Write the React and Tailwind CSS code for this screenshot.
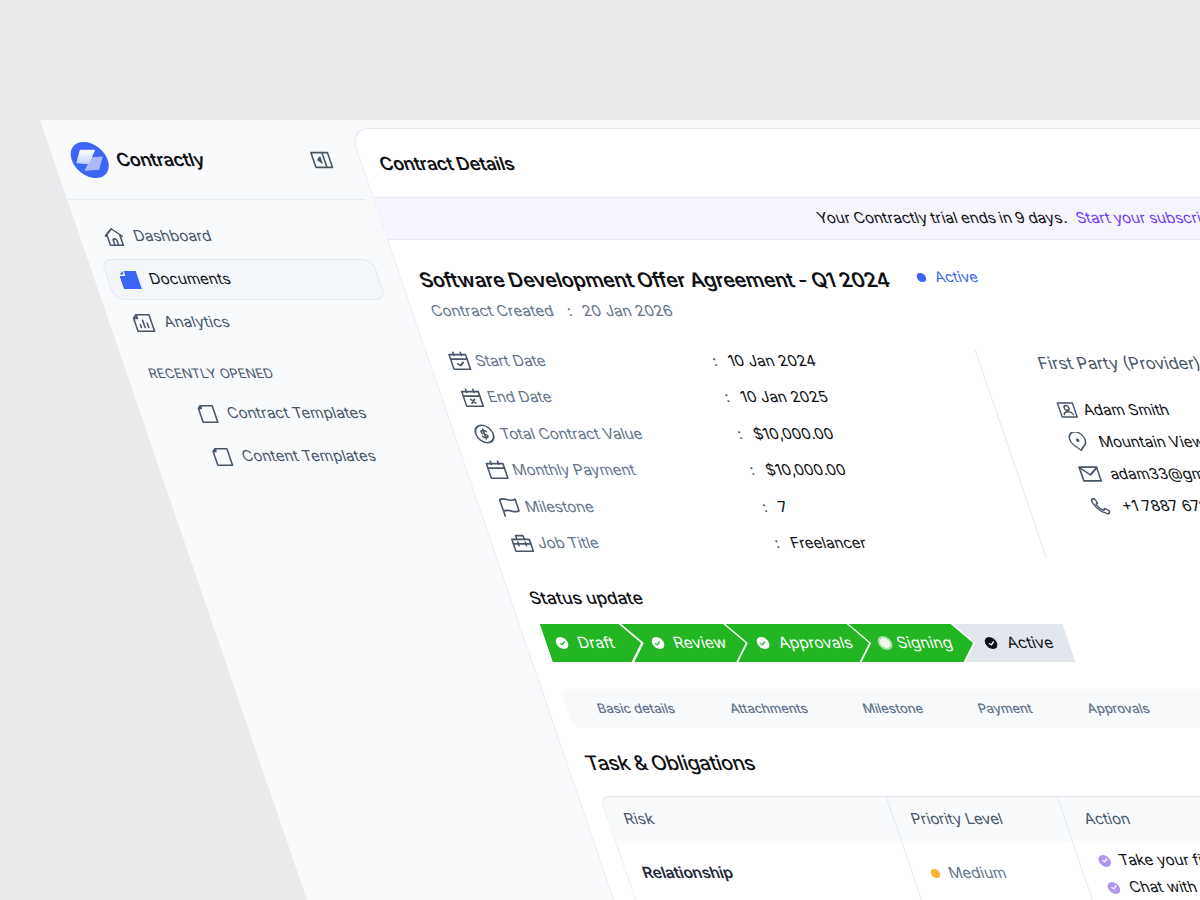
import React from "react";
import { Check } from "lucide-react";

const S = ({ children, size = 20, vb = 24, sw = 1.8, className = "" }) => (
  <svg width={size} height={size} viewBox={`0 0 ${vb} ${vb}`} fill="none" stroke="#475569" strokeWidth={sw} strokeLinecap="round" strokeLinejoin="round" className={`shrink-0 ${className}`}>
    {children}
  </svg>
);

const Home = () => (<S size={22}><path d="M3 11 12 3l9 8M5 9.500V21h14V9.500M10 21v-5a2 2 0 0 1 4 0v5" /></S>);
const Collapse = () => (<S size={22}><rect x="3" y="4" width="18" height="16" /><path d="M15 4v16M11 9l-3 3 3 3z" fill="#475569" /></S>);
const DocFill = () => (<svg width="20" height="20" viewBox="0 0 20 20" className="shrink-0"><path d="M6 1h12v18H0V6h6z" fill="#3b66f5" /><path d="M4.500 1v3.500H1z" fill="#3b66f5" /></svg>);
const Analytics = () => (<S size={22}><path d="M7 3h14v18H3V7z" /><path d="M8 17v-3M12 17V9M16 17v-5" /><path d="M7 3v4H3" /></S>);
const Doc = () => (<S size={22}><path d="M8 3h12v18H4V7z" /><path d="M7 3v3H4z" fill="#475569" /></S>);
const Cal = ({ children }) => (<S size={22}><rect x="3" y="5" width="18" height="16" /><path d="M3 10h18M8 2.500V6M16 2.500V6" />{children}</S>);
const Dollar = () => (<S size={22}><circle cx="12" cy="12" r="9.500" /><path d="M15 9.500c-.4-1-1.500-1.500-3-1.500-1.700 0-2.900.8-2.900 2s1.200 1.700 2.900 2 2.900.8 2.900 2-1.300 2-2.900 2c-1.500 0-2.600-.6-3-1.600M12 6.500v11" /></S>);
const FlagI = () => (<S size={22}><path d="M4 22V4c3-1.500 6-1 9 0s5 1 8-.5V16c-3 1.500-5 1.500-8 .5s-6-1.500-9 0" /></S>);
const Case = () => (<S size={22}><rect x="2.500" y="8" width="19" height="13" /><path d="M8 8V4h8v4M2.500 13h19M8 11v4M16 11v4" /></S>);
const User = () => (<S size={20}><rect x="3" y="3.500" width="18" height="17" /><circle cx="12" cy="9.500" r="2.800" /><path d="M6.500 17.500c1-2.600 3-3.500 5.500-3.500s4.500.9 5.500 3.500" /></S>);
const Pin = () => (<S size={20}><path d="M12 22 5 15a9.200 9.200 0 1 1 14 0z" /><circle cx="12" cy="10" r="1.200" fill="#475569" /></S>);
const MailI = () => (<S size={22}><rect x="2.500" y="4.500" width="19" height="15" /><path d="m2.500 5 9.500 8 9.500-8" /></S>);
const PhoneI = () => (<S size={20}><path d="M8 3 5 4c-1 .6-1.500 1.800-1 3.500 2 7 6.500 11.500 13 13.500 1.500.4 2.800 0 3.400-1l.6-2.500-4.500-2.500-2 2c-3-1-5.500-3.500-6.800-6.800l2.300-2z" /></S>);

const CheckDot = ({ bg, fg }) => (
  <span className={`flex h-3 w-3 shrink-0 items-center justify-center rounded-full ${bg}`}>
    <Check size={7} strokeWidth={4} color={fg} />
  </span>
);

const details = [
  [<Cal key="a"><path d="m9 15 2.500 2 4-3.500" /></Cal>, "Start Date", "10 Jan 2024"],
  [<Cal key="b"><path d="m10 13.500 4 4M14 13.500l-4 4" /></Cal>, "End Date", "10 Jan 2025"],
  [<Dollar key="c" />, "Total Contract Value", "$10,000.00"],
  [<Cal key="d" />, "Monthly Payment", "$10,000.00"],
  [<FlagI key="e" />, "Milestone", "7"],
  [<Case key="f" />, "Job Title", "Freelancer"],
];

const party = [
  [<User key="a" />, "Adam Smith", "w-[26px]"],
  [<Pin key="b" />, "Mountain View, California", "w-[31px]"],
  [<MailI key="c" />, "adam33@gmail.com", "w-[31px]"],
  [<PhoneI key="d" />, "+1 7887 6790 00", "w-[32px]"],
];

const chevron = "[clip-path:polygon(0_0,calc(100%-16px)_0,100%_50%,calc(100%-16px)_100%,0_100%,16px_50%)]";

export default function App() {
  return (
    <div className="h-[900px] w-[1200px] overflow-hidden bg-[#e8eaec] pl-[40px] pt-[120px] [font-family:Inter,sans-serif]">
      <div className="flex h-[800px] w-[1200px] origin-top-left skew-x-[18.9deg] bg-[#f9fafc]">
        <aside className="w-[306px] shrink-0">
          <div className="flex h-[80px] w-[298px] items-center border-b border-[#e8ebf0] pl-[18px]">
            <span className="relative h-[36px] w-[36px] shrink-0 overflow-hidden rounded-full bg-[#3b66f5]">
              <svg width="36" height="36" viewBox="0 0 36 36">
                <defs>
                  <linearGradient id="lg" x1="0" y1="0" x2="0" y2="1">
                    <stop offset="0" stopColor="#ffffff" />
                    <stop offset="1" stopColor="#c3cffc" />
                  </linearGradient>
                </defs>
                <path d="M20.700 15.700 31.400 15l-7.600 12.300-13.700 1z" fill="#a9b9fb" stroke="#a9b9fb" strokeWidth="1" strokeLinejoin="round" />
                <path d="M12 8.300h14L15.700 21.700 4.400 20.700z" fill="url(#lg)" stroke="url(#lg)" strokeWidth="1" strokeLinejoin="round" />
              </svg>
            </span>
            <span className="ml-[9px] text-[18px] font-semibold tracking-[-0.4px] text-[#0f1115]">Contractly</span>
            <span className="ml-[107px]"><Collapse /></span>
          </div>
          <nav className="pl-[13px] pt-[14px] text-[15px] text-[#475569]">
            <div className="flex h-[45px] items-center gap-[9px] pl-[10px]"><Home />Dashboard</div>
            <div className="flex h-[41px] w-[272px] items-center gap-[9px] rounded-[10px] border border-[#e2e8f0] bg-[#f2f5f9] pl-[12px] text-[#0f1115]"><DocFill />Documents</div>
            <div className="mt-[1px] flex h-[43px] items-center gap-[10px] pl-[10px]"><Analytics />Analytics</div>
          </nav>
          <div className="mt-[19px] h-[20px] pl-[22px] text-[13px] leading-[20px] text-[#475569]">RECENTLY OPENED</div>
          <div className="mt-[9px] pl-[56px] text-[15px] text-[#475569]">
            <div className="flex h-[43px] items-center gap-[9px]"><Doc />Contract Templates</div>
            <div className="flex h-[43px] items-center gap-[9px]"><Doc />Content Templates</div>
          </div>
        </aside>

        <main className="mt-[8px] min-w-0 flex-1 rounded-tl-[20px] border-l border-t border-[#e2e8f0] bg-white">
          <div className="flex h-[68px] items-center pl-[18px] text-[18px] font-semibold tracking-[-0.4px] text-[#0f1115]">Contract Details</div>
          <div className="flex h-[43px] items-center whitespace-nowrap border-y border-[#e6e8ef] bg-[#f6f4fd] pl-[437px] text-[15px] text-[#0f1115] [word-spacing:-0.6px]">
            Your Contractly trial ends in 9 days.
            <span className="ml-[10px] text-[#6d3cf5]">Start your subscription</span>
          </div>

          <div className="pl-[18px]">
            <div className="mt-[26px] flex h-[28px] items-center">
              <h1 className="w-[470px] whitespace-nowrap text-[20px] font-semibold tracking-[-0.37px] text-[#0f1115]">Software Development Offer Agreement - Q1 2024</h1>
              <span className="-mt-[6px] ml-[28px] h-[9px] w-[9px] rounded-full bg-[#3b66f5]" />
              <span className="-mt-[6px] ml-[9px] text-[14.5px] text-[#3b66f5]">Active</span>
            </div>
            <div className="mt-[5px] flex h-[24px] items-center pl-[1px] text-[15px] text-[#64748b]">
              <span className="w-[136px]">Contract Created</span>
              <span className="w-[15px]">:</span>
              <span>20 Jan 2026</span>
            </div>

            <div className="mt-[20px] flex h-[218px]">
              <div className="w-[531px] shrink-0 pl-[1px]">
                {details.map(([icon, label, value]) => (
                  <div key={label} className="flex h-[36.4px] items-center text-[15px]">
                    <span className="flex w-[27px] shrink-0">{icon}</span>
                    <span className="w-[237px] shrink-0 tracking-[-0.1px] text-[#64748b]">{label}</span>
                    <span className="w-[16px] shrink-0 text-[#475569]">:</span>
                    <span className="text-[#0f1115]">{value}</span>
                  </div>
                ))}
              </div>
              <div className="mb-[3px] mt-[7px] w-px shrink-0 bg-[#e2e8f0]" />
              <div className="whitespace-nowrap pl-[58px] pt-[8px]">
                <div className="h-[24px] text-[16.5px] leading-[24px] text-[#475569]">First Party (Provider)</div>
                <div className="mt-[19px] pl-[3px] text-[15px] text-[#0f1115]">
                  {party.map(([icon, text, w]) => (
                    <div key={text} className="flex h-[32px] items-center">
                      <span className={`flex shrink-0 ${w}`}>{icon}</span>
                      {text}
                    </div>
                  ))}
                </div>
              </div>
            </div>

            <div className="ml-[1px] mt-[25px] h-[24px] text-[17px] font-medium leading-[24px] text-[#0f1115]">Status update</div>

            <div className="ml-[2px] mt-[14px] flex h-[38px] text-[15.5px]">
              <div className="flex w-[95px] items-center gap-[10px] bg-[#22b624] pl-[10px] text-white [clip-path:polygon(0_0,calc(100%-16px)_0,100%_50%,calc(100%-16px)_100%,0_100%)]">
                <CheckDot bg="bg-white" fg="#22b624" />Draft
              </div>
              <div className={`-ml-[13.3px] flex w-[118px] items-center gap-[10px] bg-[#22b624] pl-[24px] text-white ${chevron}`}>
                <CheckDot bg="bg-white" fg="#22b624" />Review
              </div>
              <div className={`-ml-[14px] flex w-[137.400px] items-center gap-[10px] bg-[#22b624] pl-[25px] text-white ${chevron}`}>
                <CheckDot bg="bg-white" fg="#22b624" />Approvals
              </div>
              <div className={`-ml-[14px] flex w-[118px] items-center gap-[5px] bg-[#22b624] pl-[23px] text-white ${chevron}`}>
                <span className="h-[14px] w-[14px] shrink-0 rounded-full border-2 border-[#a7e0a2] bg-[#eef8ec]" />Signing
              </div>
              <div className="-ml-[14px] flex w-[110px] items-center gap-[10px] bg-[#e2e6ed] pl-[26px] text-[#0f1115] [clip-path:polygon(0_0,100%_0,100%_100%,0_100%,16px_50%)]">
                <CheckDot bg="bg-[#0f1115]" fg="#ffffff" />Active
              </div>
            </div>

            <div className="mt-[27px] flex h-[39px] items-center gap-[55.5px] whitespace-nowrap rounded-l-[10px] bg-[#f8fafc] pl-[31px] text-[13px] font-medium tracking-[-0.1px] text-[#64748b]">
              <span>Basic details</span>
              <span>Attachments</span>
              <span>Milestone</span>
              <span>Payment</span>
              <span>Approvals</span>
            </div>

            <h2 className="ml-[1px] mt-[21px] h-[28px] text-[20px] font-medium leading-[28px] tracking-[-0.5px] text-[#0f1115]">Task &amp; Obligations</h2>

            <div className="ml-[3px] mt-[19px] grid grid-cols-[285px_171px_1fr] rounded-tl-[10px] border-l border-t border-[#e2e8f0] text-[15px]">
              <div className="flex h-[44px] items-center rounded-tl-[10px] bg-[#f8fafc] pl-[16px] text-[#475569]">Risk</div>
              <div className="flex h-[44px] items-center border-l border-[#e2e8f0] bg-[#f8fafc] pl-[17px] tracking-[-0.15px] text-[#475569]">Priority Level</div>
              <div className="flex h-[44px] items-center border-l border-[#e2e8f0] bg-[#f8fafc] pl-[19px] text-[#475569]">Action</div>
              <div className="flex h-[64px] items-center pl-[16px] text-[15.5px] font-semibold tracking-[-0.2px] text-[#1e293b]">Relationship</div>
              <div className="flex h-[64px] items-center gap-[9px] border-l border-[#e2e8f0] pl-[18px] text-[#64748b]">
                <span className="h-[9px] w-[9px] rounded-full bg-[#f9b233]" />Medium
              </div>
              <div className="h-[64px] whitespace-nowrap border-l border-[#e2e8f0] pl-[19px] pt-[6px] text-[#0f1115]">
                <div className="flex h-[27px] items-center gap-[9px]"><CheckDot bg="bg-[#b197f0]" fg="#ffffff" />Take your first step</div>
                <div className="flex h-[27px] items-center gap-[10px]"><CheckDot bg="bg-[#b197f0]" fg="#ffffff" />Chat with your manager</div>
              </div>
            </div>
          </div>
        </main>
      </div>
    </div>
  );
}
